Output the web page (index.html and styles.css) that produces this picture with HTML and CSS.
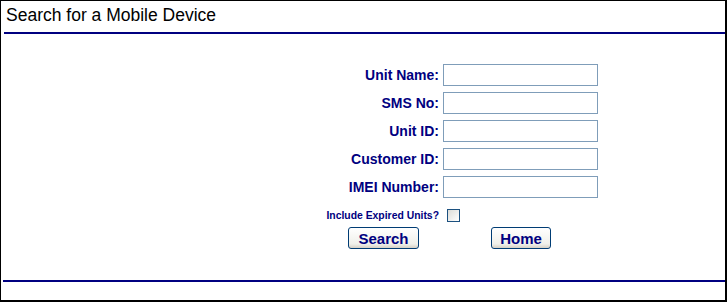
FILE: index.html
```html
<!DOCTYPE html>
<html lang="en">

<head>
    <meta charset="UTF-8">
    <title>Search for a Mobile Device</title>
    <link rel="stylesheet" href="styles.css">
</head>

<body>
    <div class="frame">
        <h1 class="page-title">Search for a Mobile Device</h1>
        <div class="rule"></div>

        <form class="search-form">
            <label for="unit-name">Unit Name:</label>
            <input type="text" id="unit-name">

            <label for="sms-no">SMS No:</label>
            <input type="text" id="sms-no">

            <label for="unit-id">Unit ID:</label>
            <input type="text" id="unit-id">

            <label for="customer-id">Customer ID:</label>
            <input type="text" id="customer-id">

            <label for="imei">IMEI Number:</label>
            <input type="text" id="imei">

            <label for="expired" class="small-label">Include Expired Units?</label>
            <span class="check-cell"><input type="checkbox" id="expired"></span>

            <div class="buttons">
                <button type="button" class="btn btn-search">Search</button>
                <button type="button" class="btn btn-home">Home</button>
            </div>
        </form>

        <div class="rule rule-bottom"></div>
    </div>
</body>

</html>
```

FILE: styles.css
```css
/* Reset */
*,
*::after,
*::before {
    box-sizing: border-box;
    padding: 0;
    margin: 0;
}

body {
    background-color: #fff;
    font-family: Arial, "Liberation Sans", sans-serif;
    width: 727px;
    height: 302px;
}

.frame {
    width: 727px;
    height: 302px;
    border: 1px solid black;
    border-right-width: 2px;
    border-bottom-width: 2px;
    display: flex;
    flex-direction: column;
}

.page-title {
    font-size: 17.5px;
    font-weight: normal;
    color: black;
    padding: 4px 0 0 5px;
    height: 31px;
}

.rule {
    height: 2px;
    background-color: #000080;
    margin-left: 3px;
}

.rule-bottom {
    margin-left: 2px;
}

.search-form {
    display: grid;
    grid-template-columns: 150px 155px;
    column-gap: 4px;
    row-gap: 6px;
    align-items: center;
    margin: 30px 0 0 288px;
    height: 216px;
    align-content: start;
}

.search-form label {
    text-align: right;
    font-size: 14px;
    font-weight: bold;
    color: #000080;
}

.search-form input[type=text] {
    height: 22px;
    width: 155px;
    border: 1px solid #7f9db9;
    outline: none;
    padding: 2px 3px;
}

.search-form .small-label {
    font-size: 10.4px;
    margin-top: 2px;
}

.check-cell {
    display: flex;
    align-items: center;
    height: 18px;
    margin-top: 2px;
}

.check-cell input {
    appearance: none;
    width: 13px;
    height: 13px;
    margin-left: 4px;
    border: 1px solid #1c5180;
    background: linear-gradient(135deg, #dcdcd7, #fff);
}

.buttons {
    grid-column: 1 / 3;
    display: flex;
    gap: 72px;
    padding-left: 59px;
    margin-top: -3px;
}

.btn {
    height: 22px;
    border: 1px solid #003c74;
    border-radius: 3px;
    background: linear-gradient(#fff, #f0f0ea 80%, #d6d0c5);
    font-family: Arial, "Liberation Sans", sans-serif;
    font-size: 15px;
    font-weight: bold;
    color: #000080;
}

.btn-search {
    width: 71px;
}

.btn-home {
    width: 60px;
}
```
